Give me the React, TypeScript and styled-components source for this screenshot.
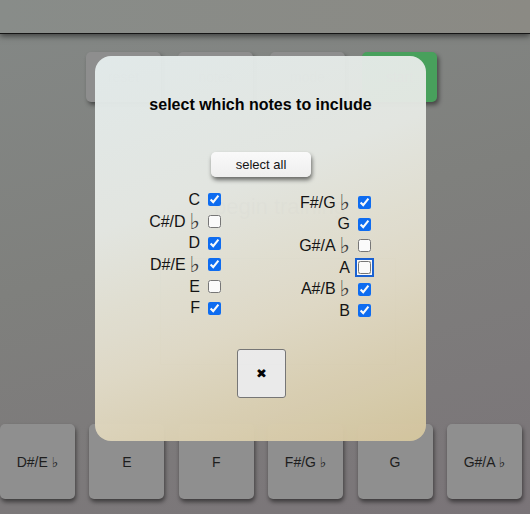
import React from "react";
import styled, { createGlobalStyle } from "styled-components";

const Global = createGlobalStyle`
  html, body { margin: 0; padding: 0; }
  body {
    width: 530px;
    height: 514px;
    overflow: hidden;
    font-family: "Liberation Sans", Arial, "DejaVu Sans", sans-serif;
    background: linear-gradient(165deg, #848886 0%, #7f807d 45%, #7a7478 100%);
  }
`;

const Page = styled.div`
  position: relative;
  width: 530px;
  height: 514px;
  display: flex;
  flex-direction: column;
`;

const Header = styled.div`
  height: 33px;
  flex: none;
  background: linear-gradient(90deg, #888c89 0%, #8b8a84 100%);
  box-shadow: 0 1px 0 #151515, 0 3px 6px rgba(0, 0, 0, 0.55);
  position: relative;
  z-index: 1;
`;

const TopRow = styled.div`
  display: flex;
  gap: 17px;
  margin-top: 19px;
  padding-left: 86px;
  flex: none;
`;

const TopButton = styled.div<{ $green?: boolean }>`
  width: 75px;
  height: 50px;
  border-radius: 5px;
  background: ${(p) => (p.$green ? "#48a05c" : "#8e8e8e")};
  box-shadow: 2px 3px 4px rgba(0, 0, 0, 0.45);
  display: flex;
  align-items: center;
  justify-content: center;
  font-size: 14px;
  color: #6a6a6a;
`;

const Middle = styled.div`
  flex: 1;
  display: flex;
  flex-direction: column;
  align-items: center;
`;

const GhostTitle = styled.div`
  margin-top: 92px;
  margin-left: 30px;
  font-size: 22px;
  color: #3a3a3a;
`;

const GhostBox = styled.div`
  margin-top: 38px;
  margin-left: 25px;
  width: 234px;
  height: 105px;
  border: 1px solid #555;
`;

const BottomRow = styled.div`
  display: flex;
  gap: 14.4px;
  height: 75px;
  margin-bottom: 15px;
  flex: none;
`;

const NoteButton = styled.div`
  width: 75px;
  height: 75px;
  flex: none;
  border-radius: 5px;
  background: #8f8f8f;
  box-shadow: 1px 3px 4px rgba(0, 0, 0, 0.5);
  display: flex;
  align-items: center;
  justify-content: center;
  font-size: 14px;
  color: #1e1e1e;
`;

const Modal = styled.div`
  position: absolute;
  left: 95px;
  top: 56px;
  width: 331px;
  height: 385px;
  box-sizing: border-box;
  border-radius: 16px;
  opacity: 0.965;
  z-index: 2;
  background: linear-gradient(
    160deg,
    #e5eded 0%,
    #e6e9e4 35%,
    #e2dcc8 65%,
    #d5c69e 100%
  );
  display: flex;
  flex-direction: column;
  align-items: center;
  padding-top: 40px;
`;

const Title = styled.div`
  font-size: 16px;
  font-weight: bold;
  line-height: 18px;
  color: #000;
`;

const SelectAll = styled.button`
  margin-top: 38px;
  margin-left: 1px;
  width: 100px;
  height: 25px;
  border: none;
  border-radius: 5px;
  background: linear-gradient(180deg, #ffffff 0%, #f3f3f3 100%);
  box-shadow: 1px 3px 4px rgba(0, 0, 0, 0.55);
  font-family: "Liberation Sans", Arial, sans-serif;
  font-size: 13px;
  color: #111;
  padding: 0;
`;

const Columns = styled.div`
  align-self: flex-start;
  margin-top: 12px;
  margin-left: 9px;
  display: grid;
  grid-template-columns: 120px 120px;
  column-gap: 30px;
`;

const Column = styled.div<{ $offset?: number }>`
  display: flex;
  flex-direction: column;
  padding-top: ${(p) => p.$offset ?? 0}px;
`;

const Row = styled.label`
  height: 21.7px;
  display: flex;
  align-items: center;
  justify-content: flex-end;
  font-size: 16px;
  color: #111;
`;

const Flat = styled.span`
  font-family: "DejaVu Sans", sans-serif;
  font-size: 22px;
  line-height: 16px;
  color: #3a3a3a;
  margin-left: 4px;
`;

const Check = styled.input<{ $focus?: boolean }>`
  width: 13px;
  height: 13px;
  margin: 0 3px 0 8px;
  accent-color: #0a6cf5;
  ${(p) =>
    p.$focus
      ? `outline: 2px solid #1660d6; outline-offset: 1px; box-shadow: 0 0 0 1px #fff;`
      : ""}
`;

const CloseButton = styled.button`
  margin-top: 27px;
  margin-left: 1px;
  width: 49px;
  height: 49px;
  background: #efefef;
  border: 1px solid #767676;
  border-radius: 3px;
  font-size: 13px;
  color: #000;
  padding: 0;
  display: flex;
  align-items: center;
  justify-content: center;
`;

type Note = { name: string; flat?: boolean; checked: boolean; focus?: boolean };

const left: Note[] = [
  { name: "C", checked: true },
  { name: "C#/D", flat: true, checked: false },
  { name: "D", checked: true },
  { name: "D#/E", flat: true, checked: true },
  { name: "E", checked: false },
  { name: "F", checked: true },
];

const right: Note[] = [
  { name: "F#/G", flat: true, checked: true },
  { name: "G", checked: true },
  { name: "G#/A", flat: true, checked: false },
  { name: "A", checked: false, focus: true },
  { name: "A#/B", flat: true, checked: true },
  { name: "B", checked: true },
];

const bottomNotes = ["D#/E ♭", "E", "F", "F#/G ♭", "G", "G#/A ♭"];

function NoteRow({ n }: { n: Note }) {
  return (
    <Row>
      {n.name}
      {n.flat && <Flat>♭</Flat>}
      <Check type="checkbox" defaultChecked={n.checked} $focus={n.focus} />
    </Row>
  );
}

export default function App() {
  return (
    <>
      <Global />
      <Page>
        <Header />
        <TopRow>
          <TopButton>reset</TopButton>
          <TopButton>notes</TopButton>
          <TopButton>mode</TopButton>
          <TopButton $green>start</TopButton>
        </TopRow>
        <Middle>
          <GhostTitle>begin training</GhostTitle>
          <GhostBox />
        </Middle>
        <BottomRow>
          {bottomNotes.map((n) => (
            <NoteButton key={n}>{n}</NoteButton>
          ))}
        </BottomRow>
        <Modal>
          <Title>select which notes to include</Title>
          <SelectAll>select all</SelectAll>
          <Columns>
            <Column>
              {left.map((n) => (
                <NoteRow key={n.name} n={n} />
              ))}
            </Column>
            <Column $offset={2.7}>
              {right.map((n) => (
                <NoteRow key={n.name} n={n} />
              ))}
            </Column>
          </Columns>
          <CloseButton>✖</CloseButton>
        </Modal>
      </Page>
    </>
  );
}
